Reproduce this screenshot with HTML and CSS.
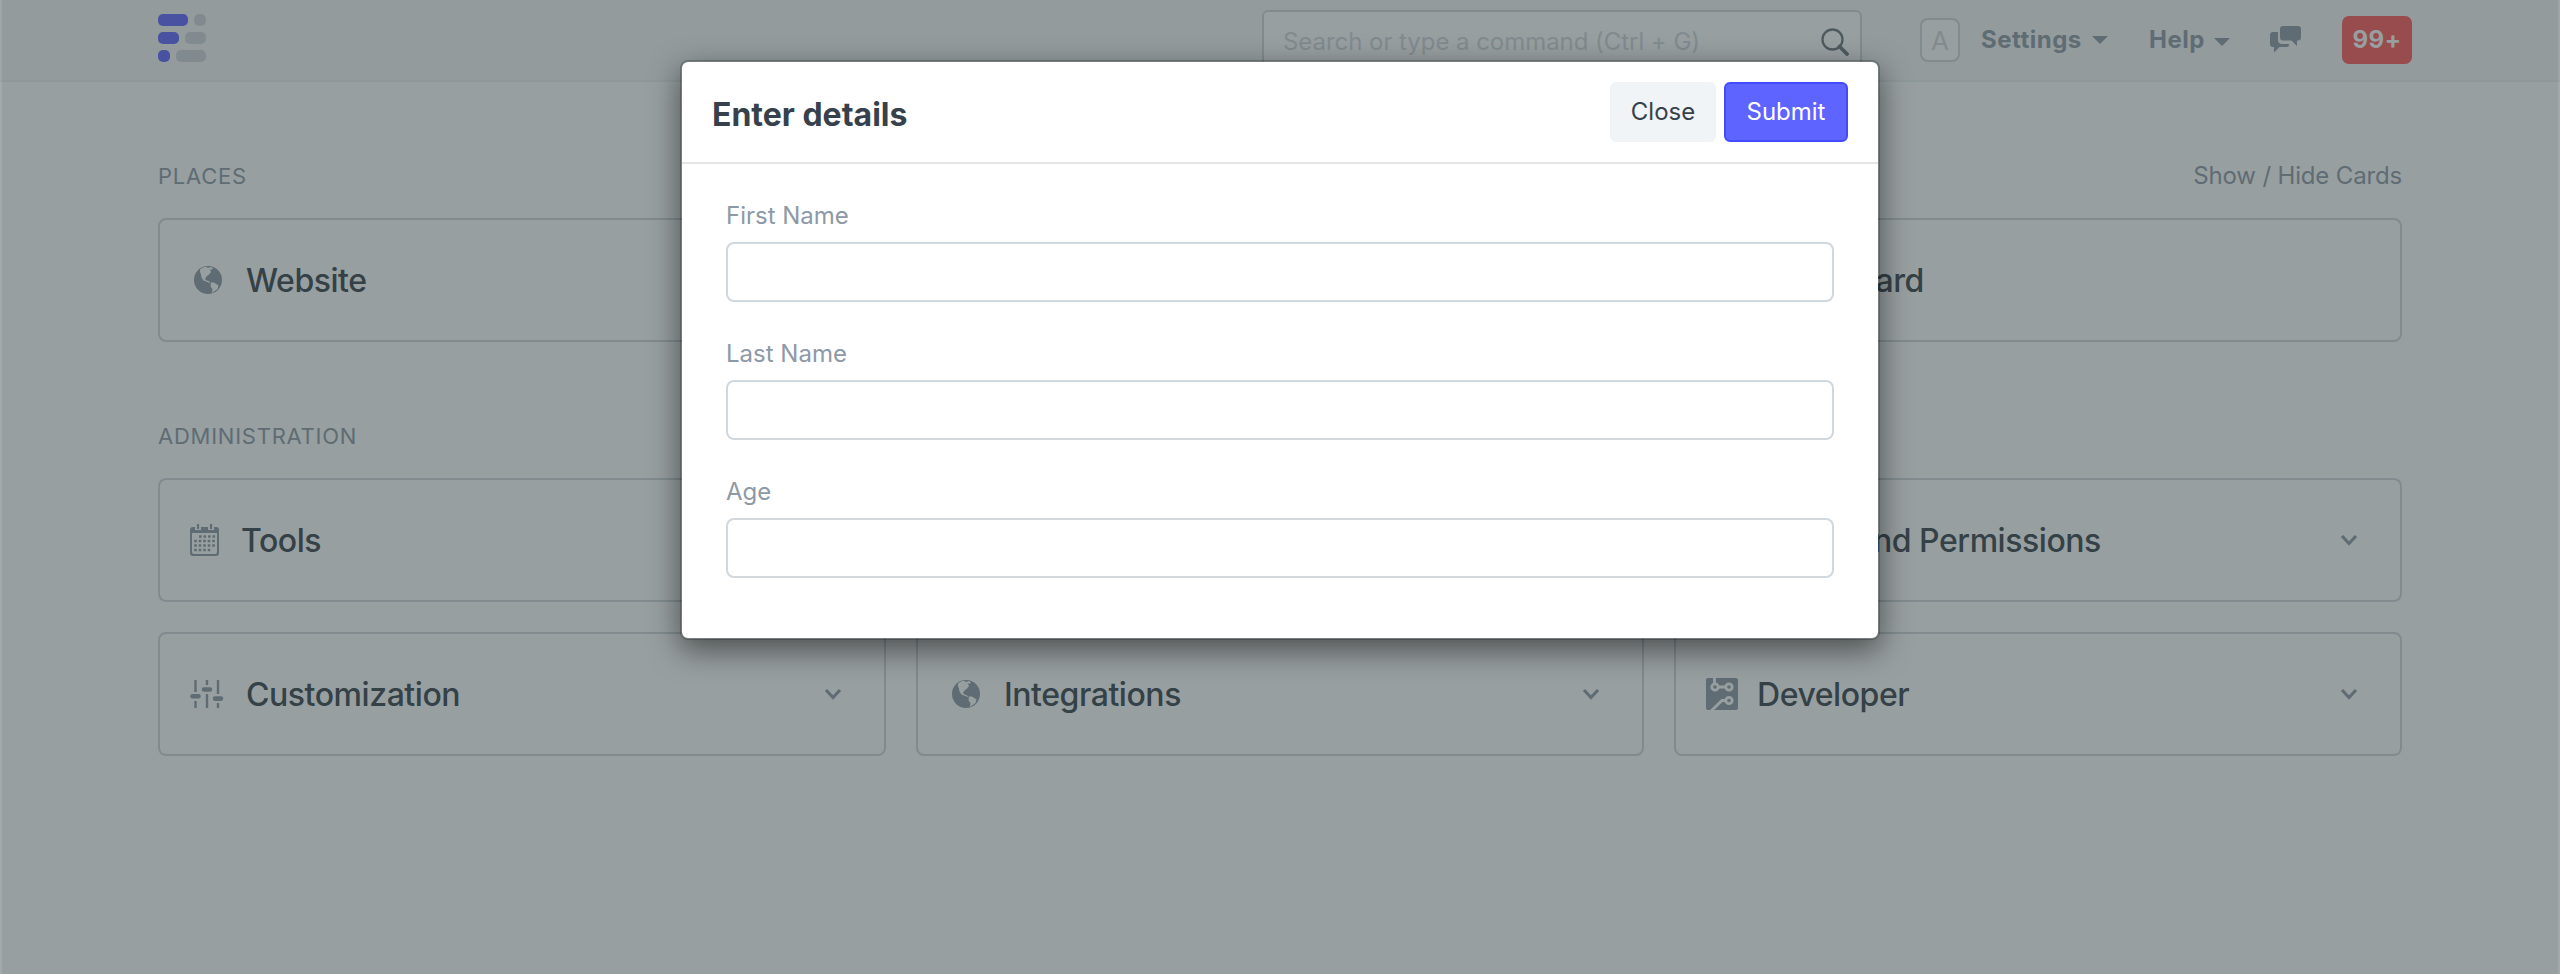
FILE: index.html
```html
<!DOCTYPE html>
<html lang="en">
<head>
<meta charset="utf-8">
<title>Desk</title>
<link rel="stylesheet" href="styles.css">
</head>
<body>
<svg class="defs" aria-hidden="true">
  <symbol id="globe" viewBox="0 0 28 28"><circle cx="14" cy="14" r="14"/><path class="land" d="M6 3.500 9 1.600 12 .8 14 2 17 1 19 2.500 17 4 15.500 3 17 6 15 8.500 12.500 10.500 11 13 12.500 14.500 14.500 15 17 17.500 15 16.800 12 15.500 9.500 14.500 7.500 11.500 7 8.500 6 6ZM17 16.500 20 16.500 24.500 19.500 23.500 23 20 25.500 18 27.300 18.500 23 16.500 20.500Z"/></symbol>
  <symbol id="chevron" viewBox="0 0 18 12"><path d="M2 2 9 9.500 16 2" fill="none" stroke="currentColor" stroke-width="3.200"/></symbol>
</svg>
<div class="page">
  <header class="navbar">
    <div class="container nav-row">
      <svg class="logo" width="49" height="48" viewBox="0 0 49 48"><g fill="#5e64ff"><rect width="30" height="12" rx="5"/><rect y="18" width="21" height="12" rx="5"/><rect y="36" width="12" height="12" rx="5"/></g><g fill="#d1d8dd"><rect x="36" width="12" height="12" rx="5"/><rect x="27" y="18" width="21" height="12" rx="5"/><rect x="18" y="36" width="30" height="12" rx="5"/></g></svg>
      <div class="search"><span>Search or type a command (Ctrl + G)</span>
        <svg width="28" height="28" viewBox="0 0 28 28" fill="none" stroke="#6c7680"><circle cx="11.500" cy="11.500" r="10" stroke-width="2.300"/><path d="M18.500 18.500 26 26" stroke-width="3.800" stroke-linecap="round"/></svg>
      </div>
      <span class="avatar">A</span>
      <span class="menu settings">Settings</span><i class="caret caret-settings"></i>
      <span class="menu help">Help</span><i class="caret caret-help"></i>
      <svg class="chat" width="32" height="28" viewBox="0 0 32 28"><path d="M3 6H8V14Q8 18 12 18H19V18.500Q19 21 17 21H9.500L4 26.500V21H3Q0 21 0 18V9Q0 6 3 6Z"/><path d="M13 0H28Q31 0 31 3V11.500Q31 14.500 28 14.500H27V20L21.500 14.500H13Q10 14.500 10 11.500V3Q10 0 13 0Z"/></svg>
      <span class="badge">99+</span>
    </div>
  </header>
  <main class="container">
    <div class="section-head places"><span class="section-title">PLACES</span><span class="toggle">Show / Hide Cards</span></div>
    <div class="grid">
      <div class="card"><svg class="ico globe"><use href="#globe"/></svg><span>Website</span></div>
      <div class="card"></div>
      <div class="card"><span class="dashboard">Dashboard</span></div>
    </div>
    <div class="section-head admin"><span class="section-title">ADMINISTRATION</span></div>
    <div class="grid">
      <div class="card"><svg class="ico cal" width="29" height="33" viewBox="0 0 29 33"><path fill-rule="evenodd" d="M3 3H5V6H11V3H18V6H24V3H26Q29 3 29 6V29Q29 32 26 32H3Q0 32 0 29V6Q0 3 3 3ZM2 9V28Q2 30 4 30H25Q27 30 27 28V9Z"/><path d="M8 0V5M21 0V5" stroke="currentColor" stroke-width="2.200"/><path d="M9 12.500H25.500M4.200 17H25.500M4.200 21.500H25.500M4.200 26H21.500" stroke="currentColor" stroke-width="2.400" stroke-dasharray="2.600 1.900"/></svg><span>Tools</span></div>
      <div class="card"></div>
      <div class="card"><span class="users">Users and Permissions</span><svg class="chev"><use href="#chevron"/></svg></div>
      <div class="card"><svg class="ico sliders" width="34" height="28" viewBox="0 0 34 28" fill="none" stroke="currentColor"><path stroke-width="2.400" d="M5.500 0V12M5.500 21V28M17 0V5M17 14V28M28 0V14M28 23V28"/><path stroke-width="4.600" stroke-linecap="round" d="M2.500 16.300H8.500M14 9.500H20M25 18.600H31"/></svg><span>Customization</span><svg class="chev"><use href="#chevron"/></svg></div>
      <div class="card"><svg class="ico globe"><use href="#globe"/></svg><span>Integrations</span><svg class="chev"><use href="#chevron"/></svg></div>
      <div class="card"><svg class="ico dev" width="32" height="32" viewBox="0 0 32 32"><rect width="32" height="32" rx="2"/><g fill="none" stroke="#fff" stroke-width="2.800"><circle cx="9" cy="9" r="3.200"/><circle cx="23" cy="9" r="3.200"/><circle cx="23" cy="22.500" r="3.200"/><path d="M12 9H20M8.500 6V0M20 22.500H16L4 34"/></g></svg><span>Developer</span><svg class="chev"><use href="#chevron"/></svg></div>
    </div>
  </main>
</div>
<div class="backdrop"></div>
<div class="modal">
  <div class="modal-head"><h1>Enter details</h1><button class="btn close">Close</button><button class="btn submit">Submit</button></div>
  <div class="modal-body">
    <div class="field"><label for="first">First Name</label><input id="first"></div>
    <div class="field"><label for="last">Last Name</label><input id="last"></div>
    <div class="field"><label for="age">Age</label><input id="age"></div>
  </div>
</div>
</body>
</html>
```
FILE: styles.css
```css
* { box-sizing: border-box; }
body { margin: 0; width: 2560px; height: 974px; overflow: hidden; background: #fff; color: #36414c; font-family: Inter, "Liberation Sans", sans-serif; }
.defs { position: absolute; width: 0; height: 0; }
.container { width: 2244px; margin: 0 auto; }
.navbar { height: 82px; background: #f5f7fa; border-bottom: 2px solid #ebeff2; color: #8d99a6; }
.nav-row { display: flex; align-items: flex-start; }
.logo { margin-top: 14px; flex: none; }
.search { margin: 10px 0 0 1055px; width: 600px; height: 60px; flex: none; border: 2px solid #d1d8dd; border-radius: 6px; background: #fff; display: flex; justify-content: space-between; align-items: center; padding: 3px 11px 0 19px; font-size: 24px; letter-spacing: -.05px; color: #d1d8dd; }
.search span { white-space: nowrap; }
.avatar { margin: 18px 0 0 58px; width: 40px; height: 44px; flex: none; border: 2px solid #d1d8dd; border-radius: 8px; font-size: 26px; line-height: 42px; text-align: center; color: #d1d8dd; background: #fff; }
.menu { font-size: 24px; font-weight: 700; letter-spacing: .5px; line-height: 30px; margin-top: 25px; flex: none; white-space: nowrap; }
.settings { width: 100px; margin-left: 21px; }
.help { width: 55px; margin-left: 41px; }
.caret { border: 8px solid transparent; border-top-color: #8d99a6; border-bottom: 0; width: 16px; flex: none; }
.caret-settings { margin: 36px 0 0 11px; }
.caret-help { margin: 38px 0 0 10px; }
.chat { margin: 26px 0 0 40px; fill: #8d99a6; flex: none; }
.badge { margin: 16px 0 0 40px; width: 70px; height: 48px; flex: none; border-radius: 7px; background: #ff5858; color: #fff; font-size: 24px; font-weight: 700; letter-spacing: .5px; line-height: 47px; text-align: center; }
.section-head { display: flex; justify-content: space-between; align-items: center; height: 30px; color: #8d99a6; }
.places { margin: 79px 0 27px; }
.admin { margin: 79px 0 27px; }
.section-title { font-size: 22px; letter-spacing: .75px; }
.toggle { font-size: 24px; letter-spacing: -.16px; padding-bottom: 2px; }
.grid { display: grid; grid-template-columns: repeat(3, 728px); gap: 30px; }
.card { height: 124px; border: 2px solid #d1d8dd; border-radius: 8px; display: flex; align-items: center; padding: 0 42px 0 30px; font-size: 32px; font-weight: 500; letter-spacing: -.45px; white-space: nowrap; }
.dashboard { margin-left: 55px; }
.users { margin-left: 54px; }
.ico { fill: #8d99a6; color: #8d99a6; flex: none; }
.globe { width: 28px; height: 28px; margin: 0 24px 0 4px; }
.land { fill: #fff; }
.cal { margin-right: 22px; }
.sliders { margin-right: 22px; }
.dev { margin-right: 19px; }
.chev { width: 18px; height: 12px; margin-left: auto; color: #8d99a6; }
.backdrop { position: absolute; top: 0; bottom: 0; left: 2px; right: 2px; background: #334143; opacity: .5; box-shadow: 0 0 0 2px #4c5859; }
.modal { position: absolute; left: 680px; top: 60px; width: 1200px; height: 580px; background: #fff; background-clip: padding-box; border: 2px solid rgba(0,0,0,.2); border-radius: 8px; box-shadow: 0 10px 30px rgba(0,0,0,.5); }
.modal-head { height: 102px; border-bottom: 2px solid #e5e5e5; display: flex; align-items: flex-start; padding: 20px 30px 0 30px; }
h1 { margin: 14px auto 0 0; font-size: 32px; line-height: 38px; font-weight: 700; letter-spacing: 0; }
.btn { height: 60px; border: 2px solid #f0f4f7; border-radius: 6px; background: #f0f4f7; color: #36414c; font: 24px/30px Inter, sans-serif; padding: 0 0 1px; }
.close { width: 106px; margin-right: 8px; }
.submit { width: 124px; color: #fff; background: #5e64ff; border-color: #444bff; }
.modal-body { padding: 37px 44px 0; }
.field { height: 138px; }
label { display: block; height: 41px; font-size: 24px; line-height: 30px; color: #8d99a6; }
input { display: block; width: 1108px; height: 60px; border: 2px solid #d1d8dd; border-radius: 8px; background: #fff; }
```
